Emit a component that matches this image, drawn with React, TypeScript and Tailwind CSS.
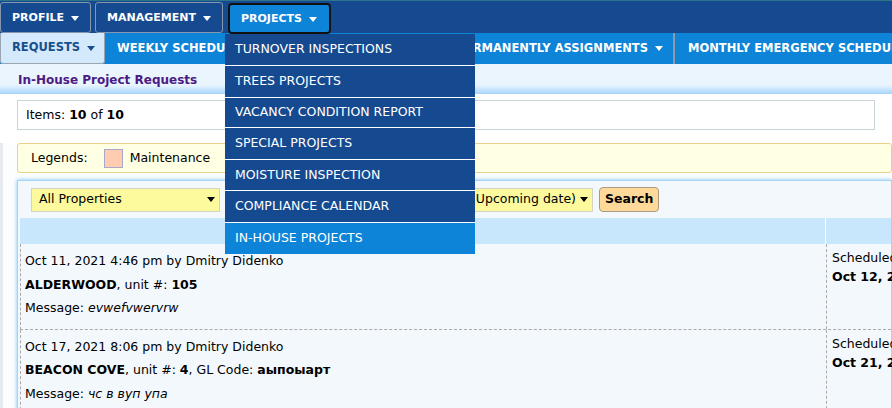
import { ReactNode } from "react";

function Caret({ className = "" }: { className?: string }) {
  return (
    <svg width="8" height="5" viewBox="0 0 8 5" className={className}>
      <path d="M0 0h8L4 5z" fill="currentColor" />
    </svg>
  );
}

function TopButton({ label, active }: { label: string; active?: boolean }) {
  return (
    <div
      className={
        active
          ? "mt-[2px] flex h-[31px] items-center gap-[7px] rounded-[4px] border-2 border-[#111] bg-[#0d84d7] pt-[1px] pr-[12px] pl-[11px] text-white"
          : "mt-[1px] flex h-[31px] items-center gap-[7px] rounded-[3px] border border-[#8796ad] pt-[1px] pr-[11px] pl-[11px] text-white"
      }
    >
      <span>{label}</span>
      <Caret />
    </div>
  );
}

function SubTab({
  children,
  className = "",
}: {
  children: ReactNode;
  className?: string;
}) {
  return (
    <div className={`flex h-full shrink-0 items-center gap-[7px] ${className}`}>
      {children}
    </div>
  );
}

const dropdown = [
  { label: "TURNOVER INSPECTIONS", h: "h-[32px]" },
  { label: "TREES PROJECTS", h: "h-[32px]" },
  { label: "VACANCY CONDITION REPORT", h: "h-[30px]" },
  { label: "SPECIAL PROJECTS", h: "h-[32px]" },
  { label: "MOISTURE INSPECTION", h: "h-[31px]" },
  { label: "COMPLIANCE CALENDAR", h: "h-[32px]" },
  { label: "IN-HOUSE PROJECTS", h: "h-[31px]", active: true },
];

const requests = [
  {
    created: "Oct 11, 2021 4:46 pm by Dmitry Didenko",
    property: "ALDERWOOD",
    unit: "105",
    gl: "",
    message: "evwefvwervrw",
    scheduled: "Oct 12, 2021",
  },
  {
    created: "Oct 17, 2021 8:06 pm by Dmitry Didenko",
    property: "BEACON COVE",
    unit: "4",
    gl: "аыпоыарт",
    message: "чс в вуп упа",
    scheduled: "Oct 21, 2021",
  },
];

export default function App() {
  return (
    <div className="relative h-[408px] w-[892px] overflow-hidden bg-white font-['DejaVu_Sans',Verdana,sans-serif] text-[12.5px] text-black">
      {/* main nav */}
      <nav className="flex h-[33px] items-start gap-[4px] border-t border-[#2c7488] bg-[#164a90] text-[11px] font-bold">
        <TopButton label="PROFILE" />
        <TopButton label="MANAGEMENT" />
        <div className="ml-[1px]">
          <TopButton label="PROJECTS" active />
        </div>
      </nav>

      {/* sub nav */}
      <div className="flex h-[31px] items-center overflow-hidden bg-[#0d84d7] text-[11.5px] font-bold text-white">
        <SubTab className="w-[105px] rounded-b-[3px] border border-t-0 border-[#9aa5b1] bg-[#d5e9fc] pl-[11px] text-[#174f8c]">
          <span>REQUESTS</span>
          <Caret />
        </SubTab>
        <SubTab className="w-[200px] pl-[12px]">
          <span>WEEKLY SCHEDULE</span>
          <Caret />
        </SubTab>
        <SubTab className="w-[370px] justify-end border-r-2 border-[#8c9aab] pr-[10px]">
          <span>PERMANENTLY ASSIGNMENTS</span>
          <Caret />
        </SubTab>
        <SubTab className="pl-[13px]">
          <span className="whitespace-nowrap">MONTHLY EMERGENCY SCHEDULE</span>
        </SubTab>
      </div>

      {/* page title */}
      <div className="flex h-[30px] items-center bg-gradient-to-b from-[#eaf5fe] from-70% to-[#a4d5fb] pt-[1px] pl-[18px] text-[12px] font-bold text-[#4b1a85]">
        In-House Project Requests
      </div>

      <div className="bg-white px-[17px] pt-[6px] pb-[13px]">
        <div className="flex h-[30px] items-center border border-[#c8d6da] bg-white pt-[1px] pl-[8px]">
          Items:&nbsp;<b>10</b>&nbsp;of&nbsp;<b>10</b>
        </div>
      </div>

      <div className="border-l-[3px] border-[#e6eaee] bg-[#fcfdfe] pl-[14px]">
        <div className="flex h-[30px] items-center rounded-[3px] border border-[#ead18a] bg-[#ffffe3] pl-[13px]">
          <span>Legends:</span>
          <span className="ml-[16px] h-[19px] w-[19px] border border-[#a8a8c8] bg-[#ffccb2]" />
          <span className="ml-[7px]">Maintenance</span>
        </div>

        {/* requests panel */}
        <div className="mt-[7px] border border-[#a6d4f7] bg-[#f3f8fd] pl-[2px] shadow-[0_0_4px_#7cc3f5]">
          <div className="flex items-center gap-[6px] py-[6px] pl-[11px]">
            <div className="flex h-[24px] w-[189px] items-center justify-between border border-[#d4d4c0] bg-[#fdfa9e] pr-[4px] pl-[7px]">
              <span>All Properties</span>
              <Caret />
            </div>
            <div className="flex h-[24px] w-[367px] items-center justify-end gap-[4px] border border-[#d4d4c0] bg-[#fdfa9e] pr-[4px]">
              <span>Sort by (Upcoming date)</span>
              <Caret />
            </div>
            <button className="h-[25px] rounded-[4px] border border-[#a89a80] bg-[#ffd99a] px-[5px] font-bold">
              Search
            </button>
          </div>

          <div className="grid grid-cols-[805px_1fr] bg-[#c8e7fd] font-bold">
            <div className="flex h-[26px] items-center justify-center pr-[90px]">
              DESCRIPTION
            </div>
            <div className="border-l border-white" />
          </div>

          {requests.map((r) => (
            <div
              key={r.created}
              className="grid grid-cols-[805px_1fr] border-b border-l border-dashed border-[#aaa]"
            >
              <div className="pt-[5px] pb-[9px] pl-[4px] leading-[23.5px]">
                <div>{r.created}</div>
                <div>
                  <b>{r.property}</b>, unit #: <b>{r.unit}</b>
                  {r.gl && (
                    <>
                      , GL Code: <b>{r.gl}</b>
                    </>
                  )}
                </div>
                <div>
                  Message: <i>{r.message}</i>
                </div>
              </div>
              <div className="border-l border-dashed border-[#aaa] pt-[4px] pl-[5px] leading-[19px] whitespace-nowrap">
                <div>Scheduled</div>
                <div className="font-bold">{r.scheduled}</div>
              </div>
            </div>
          ))}
          <div className="pl-[4px]">
            <div className="h-[20px] w-[245px] bg-gradient-to-r from-[#2cb7c8] to-[#0987c9]" />
          </div>
        </div>
      </div>

      {/* projects dropdown */}
      <ul className="absolute top-[34px] left-[225px] w-[250px] bg-[#164a90] text-white">
        {dropdown.map((d) => (
          <li
            key={d.label}
            className={`flex items-center border-b border-white pl-[10px] last:border-b-0 ${d.h} ${
              d.active ? "bg-[#0d84d7]" : ""
            }`}
          >
            {d.label}
          </li>
        ))}
      </ul>
    </div>
  );
}
